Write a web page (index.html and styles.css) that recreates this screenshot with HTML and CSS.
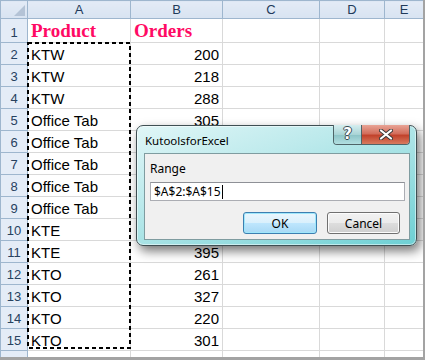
FILE: index.html
```html
<!DOCTYPE html>
<html lang="en">
<head>
  <meta charset="UTF-8" />
  <title>Select range</title>
  <link rel="stylesheet" href="styles.css">
</head>
<body>

<div class="sheet">
  <table class="grid">
    <colgroup>
      <col class="c-head"><col class="c-a"><col class="c-b"><col class="c-c"><col class="c-d"><col class="c-e">
    </colgroup>
    <tr class="col-heads">
      <th class="corner"><span class="tri"></span></th><th>A</th><th>B</th><th>C</th><th>D</th><th>E</th>
    </tr>
    <tr class="r-title">
      <th>1</th><td class="title">Product</td><td class="title">Orders</td><td></td><td></td><td></td>
    </tr>
    <tr><th>2</th><td>KTW</td><td class="num">200</td><td></td><td></td><td></td></tr>
    <tr><th>3</th><td>KTW</td><td class="num">218</td><td></td><td></td><td></td></tr>
    <tr><th>4</th><td>KTW</td><td class="num">288</td><td></td><td></td><td></td></tr>
    <tr><th>5</th><td>Office Tab</td><td class="num">305</td><td></td><td></td><td></td></tr>
    <tr><th>6</th><td>Office Tab</td><td></td><td></td><td></td><td></td></tr>
    <tr><th>7</th><td>Office Tab</td><td></td><td></td><td></td><td></td></tr>
    <tr><th>8</th><td>Office Tab</td><td></td><td></td><td></td><td></td></tr>
    <tr><th>9</th><td>Office Tab</td><td></td><td></td><td></td><td></td></tr>
    <tr><th>10</th><td>KTE</td><td></td><td></td><td></td><td></td></tr>
    <tr><th>11</th><td>KTE</td><td class="num">395</td><td></td><td></td><td></td></tr>
    <tr><th>12</th><td>KTO</td><td class="num">261</td><td></td><td></td><td></td></tr>
    <tr><th>13</th><td>KTO</td><td class="num">327</td><td></td><td></td><td></td></tr>
    <tr><th>14</th><td>KTO</td><td class="num">220</td><td></td><td></td><td></td></tr>
    <tr><th>15</th><td>KTO</td><td class="num">301</td><td></td><td></td><td></td></tr>
    <tr class="r-last"><th></th><td></td><td></td><td></td><td></td><td></td></tr>
  </table>

  <!-- copy selection A2:A15 -->
  <svg class="ants" width="104" height="307" viewBox="0 0 104 307">
    <rect x="1" y="1" width="102" height="305" fill="none" stroke="#000" stroke-width="2" stroke-dasharray="4 3"/>
  </svg>

  <!-- dialog -->
  <div class="dialog">
    <div class="titlebar">
      <span class="caption">KutoolsforExcel</span>
      <div class="caption-btns">
        <span class="btn-help">?</span>
        <span class="btn-close">
          <svg width="14" height="11" viewBox="0 0 14 11">
            <path d="M2 1.5 L12 9.5 M12 1.5 L2 9.5" stroke="#3a3a3a" stroke-width="4" stroke-linecap="round"/>
            <path d="M2 1.5 L12 9.5 M12 1.5 L2 9.5" stroke="#fff" stroke-width="2.2" stroke-linecap="round"/>
          </svg>
        </span>
      </div>
    </div>
    <div class="panel">
      <div class="label">Range</div>
      <div class="input">$A$2:$A$15<span class="caret"></span></div>
      <div class="buttons">
        <button class="btn ok">OK</button>
        <button class="btn">Cancel</button>
      </div>
    </div>
  </div>
</div>

</body>
</html>
```

FILE: styles.css
```css
body {
  margin: 0;
  background: #fff;
  overflow: hidden;
}

.sheet {
  position: relative;
  width: 423px;
  height: 357px;
  overflow: hidden;
  border-right: 2px solid #a3a3a3;
  border-bottom: 3px solid #a3a3a3;
}

/* Таблица */
.grid {
  border-collapse: collapse;
  table-layout: fixed;
  width: 423px;
  font-family: "Liberation Sans", Arial, sans-serif;
  font-size: 15px;
  color: #000;
}

.c-head { width: 27px; }
.c-a { width: 103px; }
.c-b { width: 92px; }
.c-c { width: 97px; }
.c-d { width: 65px; }
.c-e { width: 39px; }

.grid tr {
  height: 22px;
}

.grid td {
  border: 1px solid #d9d9d9;
  padding: 0 3px 1px 3px;
  line-height: 17px;
  vertical-align: bottom;
  white-space: nowrap;
  overflow: hidden;
}

.grid th {
  background: #e4ecf7;
  border: 1px solid #9eb6ce;
  border-top-color: #fff;
  font-weight: normal;
  font-size: 13px;
  line-height: 15px;
  color: #27415f;
  padding: 0 0 2px 0;
  vertical-align: bottom;
  text-align: center;
}

.grid tr.col-heads {
  height: 18px;
}

.col-heads th {
  background: linear-gradient(#e3ebf6, #d8e3f1);
  border-top: 1px solid #9eb6ce;
  vertical-align: middle;
  padding: 0;
  color: #213a5a;
}

.corner {
  position: relative;
}

.tri {
  position: absolute;
  right: 2px;
  bottom: 2px;
  width: 0;
  height: 0;
  border-left: 11px solid transparent;
  border-bottom: 11px solid #b4c3d6;
}

.grid tr.r-title {
  height: 24px;
}

.title {
  font-family: "Liberation Serif", "Times New Roman", serif;
  font-weight: bold;
  font-size: 19px;
  color: #ff0a64;
}

.grid .title {
  line-height: 21px;
  padding-bottom: 1px;
}

.num {
  text-align: right;
}

.ants {
  position: absolute;
  left: 27px;
  top: 42px;
}

/* Окно диалога */
.dialog {
  position: absolute;
  left: 136px;
  top: 125px;
  width: 281px;
  height: 121px;
  box-sizing: border-box;
  border: 1px solid #3f4f53;
  border-radius: 7px;
  background: linear-gradient(160deg, #e0f6f7 0%, #bdeaec 35%, #95dcdf 70%, #6dd0d4 100%);
  box-shadow: 3px 5px 11px rgba(0,0,0,0.55), inset 0 0 0 1px rgba(255,255,255,0.5);
  display: flex;
  flex-direction: column;
  padding: 0 6px 5px 7px;
  font-family: "Noto Sans", "Open Sans", sans-serif;
  font-size: 12px;
  color: #000;
}

.titlebar {
  height: 27px;
  display: flex;
  align-items: center;
}

.caption {
  padding-left: 1px;
  padding-top: 2px;
  font-size: 11.5px;
}

.caption-btns {
  margin-left: auto;
  align-self: flex-start;
  margin-top: -1px;
  display: flex;
  height: 19px;
  border: 1px solid #4f6468;
  border-top: none;
  border-radius: 0 0 4px 4px;
  overflow: hidden;
}

.btn-help {
  width: 27px;
  background: linear-gradient(#d6eeef, #a9d4d6 50%, #8cc3c6 51%, #b2dfe1);
  border-right: 1px solid #4f6468;
  text-align: center;
  font-family: "DejaVu Sans", sans-serif;
  font-weight: bold;
  font-size: 15px;
  line-height: 19px;
  color: #fff;
  text-shadow: 1px 0 0 #3a4a50, -1px 0 0 #3a4a50, 0 1px 0 #3a4a50, 0 -1px 0 #3a4a50;
}

.btn-close {
  width: 47px;
  background: linear-gradient(#e8a496, #d36e5c 45%, #c2432c 55%, #d87a5e);
  display: flex;
  align-items: center;
  justify-content: center;
}

.panel {
  flex: 1;
  background: #f0f0f0;
  border: 1px solid #7f9ca0;
  padding: 7px 7px 0 5px;
}

.label {
  line-height: 16px;
  margin-bottom: 5px;
}

.input {
  width: 250px;
  height: 17px;
  background: #fff;
  border: 1px solid #abadb3;
  border-top-color: #8e9096;
  padding-left: 3px;
  line-height: 17px;
  box-sizing: content-box;
  display: flex;
  align-items: center;
}

.caret {
  width: 1px;
  height: 14px;
  background: #000;
  margin-left: 1px;
}

.buttons {
  display: flex;
  justify-content: flex-end;
  gap: 10px;
  margin-top: 11px;
  padding-right: 2px;
}

.btn {
  width: 73px;
  height: 22px;
  font-family: "Noto Sans", "Open Sans", sans-serif;
  font-size: 12px;
  color: #000;
  border: 1px solid #707070;
  border-radius: 3px;
  background: linear-gradient(#f2f2f2, #ebebeb 50%, #dddddd 51%, #cfcfcf);
  box-shadow: inset 0 0 0 1px #fcfcfc;
  padding: 0;
}

.btn.ok {
  width: 74px;
  border-color: #3c7fb1;
  background: linear-gradient(#eaf6fd, #d9f0fc 50%, #bee6fd 51%, #a7d9f5);
  box-shadow: inset 0 0 0 1px #9fe7fb;
}
```
